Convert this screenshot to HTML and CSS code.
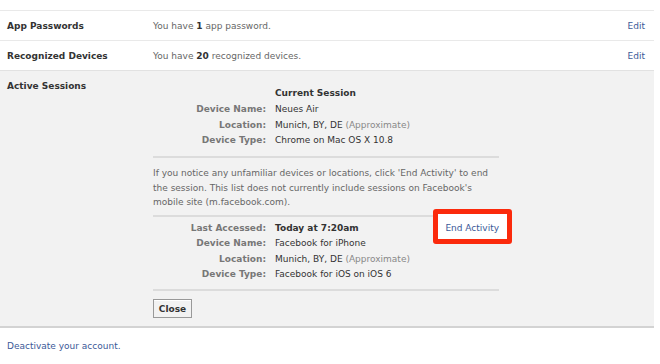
FILE: index.html
```html
<!DOCTYPE html>
<html lang="en">
<head>
  <meta charset="UTF-8">
  <title>Security Settings</title>
  <link rel="stylesheet" href="styles.css">
</head>
<body>
  <div class="settings">
    <div class="row">
      <div class="label">App Passwords</div>
      <div class="value">You have <strong>1</strong> app password.</div>
      <a class="edit" href="#">Edit</a>
    </div>
    <div class="row">
      <div class="label">Recognized Devices</div>
      <div class="value">You have <strong>20</strong> recognized devices.</div>
      <a class="edit" href="#">Edit</a>
    </div>
    <div class="row open">
      <div class="label">Active Sessions</div>
      <div class="sessions">
        <div class="session current">
          <div></div><div class="title">Current Session</div>
          <div class="key">Device Name:</div><div>Neues Air</div>
          <div class="key">Location:</div><div>Munich, BY, DE <span class="muted">(Approximate)</span></div>
          <div class="key">Device Type:</div><div>Chrome on Mac OS X 10.8</div>
        </div>
        <p class="note">If you notice any unfamiliar devices or locations, click 'End Activity' to end the session. This list does not currently include sessions on Facebook's mobile site (m.facebook.com).</p>
        <div class="session other">
          <div class="key">Last Accessed:</div><div class="title">Today at 7:20am</div><a class="end" href="#">End Activity</a>
          <div class="key">Device Name:</div><div>Facebook for iPhone</div><div></div>
          <div class="key">Location:</div><div>Munich, BY, DE <span class="muted">(Approximate)</span></div><div></div>
          <div class="key">Device Type:</div><div>Facebook for iOS on iOS 6</div><div></div>
        </div>
        <button class="close">Close</button>
      </div>
    </div>
  </div>
  <div class="footer">
    <a href="#">Deactivate your account.</a>
  </div>
</body>
</html>
```

FILE: styles.css
```css
body {
  margin: 0;
  background: #fff;
  font-family: "DejaVu Sans", "Liberation Sans", sans-serif;
  font-size: 9px;
  color: #333;
}

a {
  color: #3b5998;
  text-decoration: none;
}

.settings {
  width: 654px;
  margin-top: 10px;
}

.row {
  display: grid;
  grid-template-columns: 146px 1fr auto;
  align-items: center;
  height: 29px;
  padding: 0 9px 0 7px;
  border-top: 1px solid #e9e9e9;
}

.label {
  font-weight: bold;
  color: #333;
}

.value {
  color: #666;
}

.value strong {
  color: #333;
}

.row.open {
  height: auto;
  align-items: start;
  background: #f2f2f2;
  border-top: 1px solid #e2e2e2;
  border-bottom: 2px solid #d3d3d3;
  padding-top: 8px;
  padding-bottom: 8px;
  line-height: 14px;
}

.sessions {
  grid-column: 2 / 4;
  width: 346px;
  padding-top: 7px;
}

.session {
  display: grid;
  grid-template-columns: 113px auto 1fr;
  column-gap: 9px;
  line-height: 15.8px;
}

.session.current {
  grid-template-columns: 113px 1fr;
  padding-bottom: 7px;
  border-bottom: 2px solid #dcdcdc;
}

.session.other {
  line-height: 15.6px;
  padding: 4px 0 6px;
  border-top: 2px solid #dcdcdc;
  border-bottom: 2px solid #dcdcdc;
}

.key {
  text-align: right;
  font-weight: bold;
  color: #777;
}

.title {
  font-weight: bold;
  color: #333;
}

.muted {
  color: #888;
}

.note {
  margin: 8px 0 5px;
  color: #666;
  line-height: 14.5px;
}

.end {
  justify-self: end;
  position: relative;
  z-index: 0;
}

.end::before {
  content: "";
  position: absolute;
  top: -12px;
  bottom: -8px;
  left: -12px;
  right: -13px;
  border: 5px solid #fb2a0c;
  border-radius: 3px;
  background: #fff;
  z-index: -1;
}

.close {
  margin-top: 8px;
  height: 19px;
  width: 39px;
  padding: 0;
  font-family: inherit;
  font-size: 9px;
  font-weight: bold;
  color: #333;
  background: #f2f2f2;
  border: 1px solid #999;
  box-shadow: inset 0 1px 0 #fff;
}

.footer {
  padding: 13px 7px;
}
```
